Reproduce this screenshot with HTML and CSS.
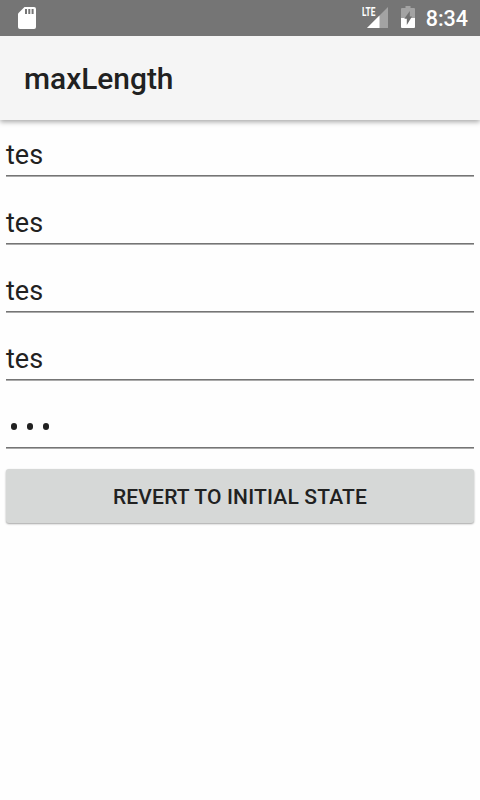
FILE: index.html
```html
<!DOCTYPE html>
<html lang="en">
<head>
<meta charset="utf-8">
<title>maxLength</title>
<link rel="stylesheet" href="styles.css">
</head>
<body>
<div class="status">
  <svg class="sd" width="18" height="22" viewBox="0 0 18 22"><path fill="#fff" d="M6.5 0H16a2 2 0 0 1 2 2v18a2 2 0 0 1-2 2H2a2 2 0 0 1-2-2V6.5z"/><path fill="#757575" d="M7 2h2v5H7zM10.3 2h2v5h-2zM13.6 2h2v5h-2z"/></svg>
  <div class="signal">
    <svg width="21" height="21" viewBox="0 0 21 21"><path fill="#a3a3a3" d="M21 0v21H0z"/><path fill="#fff" d="M12.5 8.5V21H0z"/></svg>
    <span class="lte">LTE</span>
  </div>
  <svg class="battery" width="14" height="22" viewBox="0 0 14 22"><path fill="#a3a3a3" d="M4.5 0h5v2H13a1 1 0 0 1 1 1v9H0V3a1 1 0 0 1 1-1h3.5z"/><path fill="#fff" d="M0 12h14v9a1 1 0 0 1-1 1H1a1 1 0 0 1-1-1z"/><path fill="#707070" d="M8.8 5v5.5H11L5.8 19v-6.2H3.3z"/></svg>
  <span class="clock">8:34</span>
</div>
<header class="bar">maxLength</header>
<main class="content">
  <div class="field">tes</div>
  <div class="field">tes</div>
  <div class="field">tes</div>
  <div class="field">tes</div>
  <div class="field password"><i></i><i></i><i></i></div>
  <button class="revert">REVERT TO INITIAL STATE</button>
</main>
</body>
</html>
```
FILE: styles.css
```css
* { box-sizing: border-box; }
body { margin: 0; height: 800px; background: #fefefe; color: #212121; font-family: Roboto, sans-serif; overflow: hidden; }
.status { position: relative; z-index: 2; height: 36px; background: #757575; display: flex; align-items: flex-start; padding: 0 12px 0 18px; color: #fff; }
.sd { margin-top: 7px; }
.signal { position: relative; margin: 7px 0 0 auto; height: 21px; }
.signal svg { display: block; }
.lte { position: absolute; left: -5px; top: -1px; font-size: 12.5px; line-height: 12px; font-weight: 700; transform: scaleX(.66); transform-origin: 0 0; }
.battery { margin: 6px 11px 0 13px; }
.clock { font-size: 21.5px; line-height: 37px; font-weight: 500; }
.bar { position: relative; height: 84px; background: #f5f5f5; padding-left: 24px; font-size: 29.9px; line-height: 86px; font-weight: 500; box-shadow: 0 2px 5px rgba(0,0,0,.34); }
.content { padding: 0 6px; }
.field { height: 57px; border-bottom: 1px solid #ababab; box-shadow: inset 0 -1px #757575; font-size: 27px; line-height: 31px; padding-top: 20px; margin-bottom: 11px; }
.password { display: flex; gap: 10px; padding: 31px 0 0 5px; }
.password i { width: 6px; height: 7px; border-radius: 3px; background: #212121; }
.revert { display: block; width: 100%; height: 54px; margin-top: 20px; padding: 0; border: 0; border-radius: 3px; background: #d6d8d7; box-shadow: 0 1px 2px rgba(0,0,0,.36); color: #212121; font: 500 21px/56px Roboto, sans-serif; letter-spacing: .18px; }
```
